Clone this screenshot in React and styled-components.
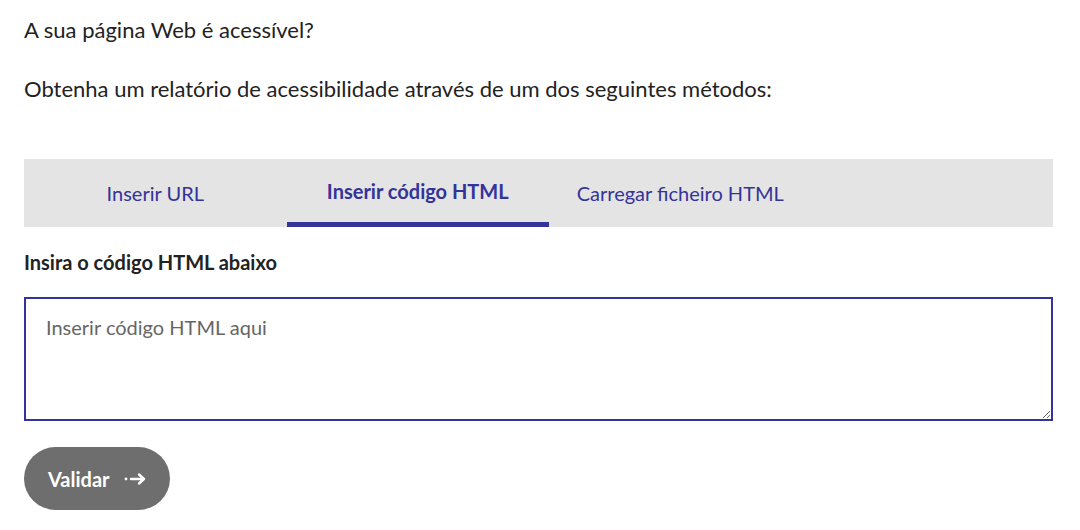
import React, { useState } from 'react'
import styled, { createGlobalStyle } from 'styled-components'

const GlobalStyle = createGlobalStyle`
  body {
    margin: 0;
    background: #fff;
    font-family: Lato, "Open Sans", sans-serif;
    color: #222;
  }
`

const Page = styled.main`
  padding: 15px 27px 0 24px;
`

const Intro = styled.p`
  margin: 0 0 ${p => p.$gap}px;
  font-size: 22px;
  line-height: 30px;
  color: #222;
`

const TabBar = styled.div`
  display: flex;
  height: 68px;
  background: #e4e4e4;
  margin-bottom: 20px;
`

const Tab = styled.button`
  width: 262.5px;
  border: none;
  background: transparent;
  font-family: inherit;
  font-size: 20px;
  font-weight: ${p => (p.$active ? 700 : 400)};
  color: #333399;
  border-bottom: ${p => (p.$active ? '5px solid #333399' : '0')};
  padding: 0;
  cursor: pointer;
`

const Label = styled.label`
  display: block;
  font-size: 20px;
  font-weight: 700;
  line-height: 30px;
  color: #222;
  margin-bottom: 20px;
`

const CodeArea = styled.textarea`
  display: block;
  box-sizing: border-box;
  width: 100%;
  height: 124px;
  border: 2px solid #333399;
  border-radius: 0;
  padding: 15px 20px;
  font-family: Lato, "Open Sans", sans-serif;
  font-size: 20px;
  line-height: 27px;
  color: #222;
  outline: none;
  margin-bottom: 26px;
  &::placeholder {
    color: #666;
  }
`

const SubmitButton = styled.button`
  display: inline-flex;
  align-items: center;
  gap: 14px;
  height: 63px;
  padding: 0 24px;
  border: none;
  border-radius: 32px;
  background: #6e6e6e;
  color: #fff;
  font-family: inherit;
  font-size: 20px;
  font-weight: 700;
  cursor: pointer;
`

function DotArrow() {
  return (
    <svg width="22" height="14" viewBox="0 0 22 14" fill="none">
      <circle cx="2" cy="7" r="1.4" fill="#fff" />
      <path d="M7 7h13M15 2.5L20 7l-5 4.5" stroke="#fff" strokeWidth="2.4" strokeLinecap="round" strokeLinejoin="round" />
    </svg>
  )
}

const tabs = ['Inserir URL', 'Inserir código HTML', 'Carregar ficheiro HTML']

export default function App() {
  const [active, setActive] = useState(1)
  return (
    <>
      <GlobalStyle />
      <Page>
        <Intro $gap={29}>A sua página Web é acessível?</Intro>
        <Intro $gap={55}>Obtenha um relatório de acessibilidade através de um dos seguintes métodos:</Intro>
        <TabBar>
          {tabs.map((t, i) => (
            <Tab key={t} $active={i === active} onClick={() => setActive(i)}>
              {t}
            </Tab>
          ))}
        </TabBar>
        <Label htmlFor="code">Insira o código HTML abaixo</Label>
        <CodeArea id="code" placeholder="Inserir código HTML aqui" />
        <SubmitButton>
          Validar
          <DotArrow />
        </SubmitButton>
      </Page>
    </>
  )
}
